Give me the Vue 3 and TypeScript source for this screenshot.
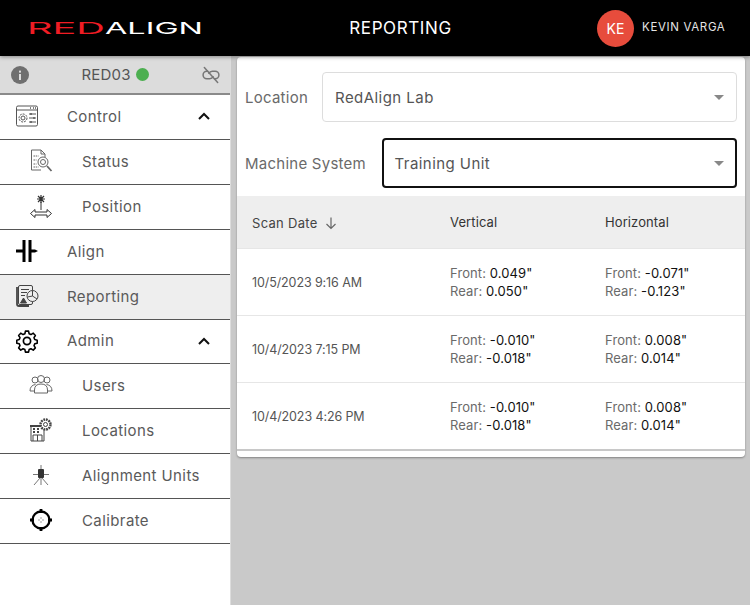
<template>
  <div class="app">
    <header class="topbar">
      <div class="topbar__logo">
        <svg class="logo" width="190" height="26" viewBox="0 0 190 26">
          <text x="3" y="19" class="logo-text" fill="#f01c24" textLength="78" lengthAdjust="spacingAndGlyphs">RED</text>
          <text x="81" y="19" class="logo-text" fill="#ffffff" textLength="98" lengthAdjust="spacingAndGlyphs">ALIGN</text>
        </svg>
      </div>
      <div class="topbar__title">REPORTING</div>
      <div class="topbar__user">
        <span class="avatar">KE</span>
        <span class="topbar__name">KEVIN VARGA</span>
      </div>
    </header>

    <div class="body">
      <aside class="sidebar">
        <div class="unit">
          <svg class="unit__info" width="18" height="18" viewBox="0 0 18 18">
            <circle cx="9" cy="9" r="9" fill="#6f6f6f" />
            <rect x="8" y="8" width="2" height="6" fill="#ddd" />
            <rect x="8" y="4.6" width="2" height="2" fill="#ddd" />
          </svg>
          <div class="unit__name">RED03<span class="unit__dot"></span></div>
          <svg class="unit__link" width="20" height="20" viewBox="0 0 24 24" fill="none" stroke="#777" stroke-width="1.8" stroke-linecap="round">
            <path d="M8 7.5H7a4.5 4.5 0 0 0 0 9h3.5a4.5 4.5 0 0 0 4-2.5" />
            <path d="M16 16.5h1a4.5 4.5 0 0 0 0-9h-3.5a4.5 4.5 0 0 0-4 2.5" />
            <path d="M4 3l16 18" />
          </svg>
        </div>

        <div class="nav-item">
          <svg class="nav-icon" width="24" height="24" viewBox="0 0 24 24" fill="none" stroke="#555" stroke-width="1">
            <rect x="1.5" y="2" width="21" height="20" rx="1.5" />
            <path d="M1.5 6h21" />
            <path d="M15 4h1M18 4h1M20 4h1" stroke-width="1.4" />
            <circle cx="8" cy="14" r="2" />
            <circle cx="8" cy="14" r="4" stroke-dasharray="2 1" />
            <path d="M14 10h7M14 14h7M14 18h7" />
            <path d="M16 9v2M19 13v2M16 17v2" stroke-width="1.4" />
          </svg>
          <span class="nav-label">Control</span>
          <svg class="nav-chevron" width="12" height="8" viewBox="0 0 12 8" fill="none" stroke="#111" stroke-width="2"><path d="M1 7l5-5 5 5" /></svg>
        </div>

        <div class="nav-item nav-item--child">
          <svg class="nav-icon" width="24" height="24" viewBox="0 0 24 24" fill="none" stroke="#666" stroke-width="1">
            <path d="M16 8V5l-4-4H2.5v20H12" />
            <path d="M12 1v4h4" />
            <path d="M4.5 7h5M4.5 11h3M4.5 15h3M4.5 18h5" stroke-dasharray="1.5 .7" />
            <circle cx="14" cy="13" r="5" />
            <circle cx="14" cy="13" r="2.5" />
            <path d="M18 17l4.5 5" stroke-width="1.8" />
          </svg>
          <span class="nav-label">Status</span>
        </div>

        <div class="nav-item nav-item--child">
          <svg class="nav-icon" width="24" height="24" viewBox="0 0 24 24" fill="none" stroke="#333" stroke-width="1">
            <path d="M12 8v8" />
            <path d="M8 5h8M12 1v8M9 2l6 6M15 2l-6 6" stroke-width="1.2" />
            <path d="M1.500 19.500l4.500-4v2.500h12v-2.500l4.500 4-4.500 4v-2.500H6v2.500z" />
          </svg>
          <span class="nav-label">Position</span>
        </div>

        <div class="nav-item">
          <svg class="nav-icon" width="24" height="24" viewBox="0 0 24 24" fill="#000">
            <rect x="7.500" y="1" width="3" height="22" />
            <rect x="13.500" y="1" width="3" height="22" />
            <rect x="1" y="10.500" width="7" height="3" />
            <path d="M16 10.500h4l3 1.500-3 1.500h-4z" />
          </svg>
          <span class="nav-label">Align</span>
        </div>

        <div class="nav-item nav-item--active">
          <svg class="nav-icon" width="24" height="24" viewBox="0 0 24 24" fill="none" stroke="#444" stroke-width="1">
            <path d="M2 3v17q0 2 2 2h10" stroke-width="1.800" />
            <rect x="3.500" y="1.500" width="14" height="19" rx="1.500" />
            <path d="M6 5.500h8M6 8.500h6M6 11.500h4" />
            <path d="M8.500 14l3 5h-6z" fill="#444" />
            <circle cx="17.500" cy="12" r="5.500" fill="#eee" />
            <path d="M17.500 6.500V12l4.500 3M17.500 12l-5 1" />
          </svg>
          <span class="nav-label">Reporting</span>
        </div>

        <div class="nav-item nav-item--short">
          <svg class="nav-icon" width="24" height="24" viewBox="0 0 24 24" fill="none" stroke="#000" stroke-width="1.700" stroke-linejoin="round">
            <path d="M10.300 2.300h3.400l.6 2.800 2 .9 2.500-1.500 2.300 2.500-1.500 2.400.8 2 2.700.7v3.400l-2.700.6-.8 2 1.500 2.400-2.300 2.400-2.500-1.500-2 .9-.6 2.800h-3.400l-.6-2.800-2-.9-2.500 1.500-2.300-2.400 1.500-2.400-.8-2-2.700-.6v-3.400l2.700-.7.8-2-1.500-2.400 2.300-2.500 2.500 1.500 2-.9z" transform="translate(12 12) scale(.92) translate(-12 -13)" />
            <circle cx="12" cy="12" r="3.600" />
          </svg>
          <span class="nav-label">Admin</span>
          <svg class="nav-chevron" width="12" height="8" viewBox="0 0 12 8" fill="none" stroke="#111" stroke-width="2"><path d="M1 7l5-5 5 5" /></svg>
        </div>

        <div class="nav-item nav-item--child">
          <svg class="nav-icon" width="24" height="24" viewBox="0 0 24 24" fill="none" stroke="#666" stroke-width="1">
            <circle cx="12" cy="6" r="3.500" />
            <circle cx="6" cy="7" r="3" />
            <circle cx="18" cy="7" r="3" />
            <path d="M5.500 20v-3q0-6 6.500-6t6.500 6v3z" fill="#fff" />
            <path d="M6.500 11.500C3 12 1 14 1 18h4.500M17.500 11.500C21 12 23 14 23 18h-4.500" />
          </svg>
          <span class="nav-label">Users</span>
        </div>

        <div class="nav-item nav-item--child">
          <svg class="nav-icon" width="24" height="24" viewBox="0 0 24 24" fill="none" stroke="#444" stroke-width="1">
            <path d="M2 8h13v15H2z" />
            <path d="M1 8h10" stroke-width="2" />
            <path d="M4 11h2M8 11h2M4 14h2M8 14h2" stroke-width="2" />
            <path d="M4 23v-6h9v6M8.500 17v6" />
            <circle cx="16.500" cy="6.500" r="5" stroke-dasharray="1.800 .8" stroke-width="2.400" fill="#fff" />
            <circle cx="16.500" cy="6.500" r="2" />
          </svg>
          <span class="nav-label">Locations</span>
        </div>

        <div class="nav-item nav-item--child">
          <svg class="nav-icon" width="24" height="24" viewBox="0 0 24 24" fill="none" stroke="#777" stroke-width="1">
            <path d="M12 2v5M4 11.500h16" />
            <rect x="9" y="6" width="6" height="9" rx="1" fill="#333" stroke="none" />
            <path d="M11 15l-6 7M13 15l6 7M12 15v7" />
          </svg>
          <span class="nav-label">Alignment Units</span>
        </div>

        <div class="nav-item nav-item--child">
          <svg class="nav-icon" width="24" height="24" viewBox="0 0 24 24" fill="none" stroke="#000">
            <circle cx="12" cy="12" r="8.500" stroke-width="2.300" />
            <path d="M12 1v4M12 19v4M1 12h4M19 12h4" stroke-width="2.800" />
            <path d="M12 9.500v1M12 13.500v1M9.500 12h1M13.500 12h1" stroke="#444" stroke-width="1" />
          </svg>
          <span class="nav-label">Calibrate</span>
        </div>
      </aside>

      <main class="main">
        <section class="panel">
          <div class="filter filter--first">
            <label class="filter__label">Location</label>
            <div class="select">
              <span>RedAlign Lab</span>
              <i class="select__caret"></i>
            </div>
          </div>
          <div class="filter">
            <label class="filter__label">Machine System</label>
            <div class="select select--focus">
              <span>Training Unit</span>
              <i class="select__caret"></i>
            </div>
          </div>

          <div class="grid grid--head">
            <div class="cell cell--date">
              Scan Date
              <svg class="sort" width="14" height="14" viewBox="0 0 14 14" fill="none" stroke="#666" stroke-width="1.200"><path d="M7 1.500v11M2.500 8l4.500 4.500L11.500 8" /></svg>
            </div>
            <div class="cell">Vertical</div>
            <div class="cell">Horizontal</div>
          </div>
          <div v-for="row in rows" :key="row.date + row.vf" class="grid grid--row">
            <div class="cell cell--date">{{ row.date }}</div>
            <div class="cell cell--values">
              <div>Front: <b>{{ row.vf }}</b></div>
              <div>Rear: <b>{{ row.vr }}</b></div>
            </div>
            <div class="cell cell--values">
              <div>Front: <b>{{ row.hf }}</b></div>
              <div>Rear: <b>{{ row.hr }}</b></div>
            </div>
          </div>
          <div class="panel__foot"></div>
        </section>
      </main>
    </div>
  </div>
</template>

<script setup lang="ts">
interface Scan {
  date: string;
  vf: string;
  vr: string;
  hf: string;
  hr: string;
}

const rows: Scan[] = [
  { date: '10/5/2023 9:16 AM', vf: '0.049"', vr: '0.050"', hf: '-0.071"', hr: '-0.123"' },
  { date: '10/4/2023 7:15 PM', vf: '-0.010"', vr: '-0.018"', hf: '0.008"', hr: '0.014"' },
  { date: '10/4/2023 4:26 PM', vf: '-0.010"', vr: '-0.018"', hf: '0.008"', hr: '0.014"' },
];
</script>

<style>
html,
body {
  margin: 0;
  height: 100%;
  overflow: hidden;
}
</style>

<style scoped>
.app {
  width: 750px;
  height: 605px;
  display: flex;
  flex-direction: column;
  font-family: Inter, "Liberation Sans", sans-serif;
  color: #444;
  background: #c9c9c9;
}

.topbar {
  height: 56px;
  flex-shrink: 0;
  background: #000;
  color: #fff;
  display: flex;
  align-items: center;
  position: relative;
  z-index: 2;
  box-shadow: 0 1px 4px rgba(0, 0, 0, 0.4);
}

.topbar__logo {
  width: 280px;
  padding-left: 24px;
  box-sizing: border-box;
  display: flex;
}

.logo {
  overflow: visible;
}

.logo-text {
  font-family: Inter, sans-serif;
  font-size: 16.500px;
  font-weight: 400;
}

.topbar__title {
  width: 241px;
  text-align: center;
  font-size: 17px;
  letter-spacing: 0.6px;
}

.topbar__user {
  display: flex;
  align-items: center;
  margin-left: 76px;
  gap: 8px;
}

.avatar {
  width: 37px;
  height: 37px;
  border-radius: 50%;
  background: #e74c3c;
  font-size: 14px;
  display: flex;
  align-items: center;
  justify-content: center;
}

.topbar__name {
  font-size: 11.5px;
  letter-spacing: 0.65px;
  margin-top: -2px;
  color: #e4e4e4;
}

.body {
  flex: 1;
  display: flex;
  min-height: 0;
}

.sidebar {
  width: 230px;
  flex-shrink: 0;
  background: #fff;
  border-right: 1px solid #ddd;
}

.unit {
  height: 37px;
  background: #dcdcdc;
  border-bottom: 2px solid #8a8a8a;
  display: flex;
  align-items: center;
  padding: 0 9px 0 11px;
}

.unit__name {
  flex: 1;
  display: flex;
  align-items: center;
  justify-content: center;
  gap: 5px;
  font-size: 15px;
  letter-spacing: 0.2px;
  color: #555;
}

.unit__dot {
  width: 13px;
  height: 13px;
  border-radius: 50%;
  background: #4caf50;
}

.nav-item {
  height: 42px;
  padding-bottom: 2px;
  display: flex;
  align-items: center;
  padding-left: 15px;
  border-bottom: 1px solid #555;
  font-size: 15px;
  color: #5a5a5a;
}

.nav-item--short {
  height: 41px;
}

.nav-item--child {
  padding-left: 29px;
}

.nav-item--active {
  background: #eee;
}

.nav-icon {
  flex-shrink: 0;
}

.nav-label {
  margin-left: 28px;
  letter-spacing: 0.4px;
}

.nav-item--child .nav-label {
  margin-left: 29px;
}

.nav-chevron {
  margin-left: auto;
  margin-right: 20px;
}

.main {
  flex: 1;
  padding: 1px 5px 0 6px;
  min-width: 0;
}

.panel {
  background: #fff;
  border-radius: 4px;
  box-shadow: 0 1px 2px rgba(0, 0, 0, 0.35);
}

.filter {
  display: flex;
  align-items: center;
  padding: 16px 8px 0;
  height: 50px;
}

.filter--first {
  padding-top: 15px;
}

.filter__label {
  font-size: 15px;
  letter-spacing: 0.25px;
  color: #6a6a6a;
  white-space: nowrap;
  margin-right: 15.500px;
}

.filter--first .filter__label {
  margin-right: 14px;
}

.select {
  flex: 1;
  height: 50px;
  box-sizing: border-box;
  border: 1px solid #ddd;
  border-radius: 4px;
  display: flex;
  align-items: center;
  justify-content: space-between;
  padding: 0 12px;
  font-size: 15px;
  letter-spacing: 0.45px;
  color: #555;
}

.select--focus {
  border: 2px solid #111;
  padding: 0 11px;
}

.select__caret {
  width: 0;
  height: 0;
  border-left: 5px solid transparent;
  border-right: 5px solid transparent;
  border-top: 5px solid #888;
}

.grid {
  display: grid;
  grid-template-columns: 198px 156px 1fr;
  border-bottom: 1px solid #e6e6e6;
}

.grid--head {
  margin-top: 8px;
  height: 52px;
  background: #eee;
  font-size: 13px;
  font-weight: 400;
  color: #333;
  align-items: center;
}

.grid--row {
  height: 66px;
  align-items: center;
  font-size: 13px;
}

.cell {
  padding-left: 14px;
  line-height: 18.500px;
  letter-spacing: 0.1px;
}

.grid .cell:nth-child(2) {
  padding-left: 15px;
}

.cell--date {
  display: flex;
  align-items: center;
  gap: 6px;
  padding-left: 15px;
  padding-top: 2px;
  color: #555;
  font-size: 12.5px;
  letter-spacing: -0.1px;
}

.grid--head .cell--date {
  color: #444;
  font-size: 13px;
  letter-spacing: 0.3px;
}

.cell--values {
  color: #6a6a6a;
}

.cell--values b {
  color: #111;
  font-weight: 400;
}

.panel__foot {
  height: 6px;
  border-top: 2px solid #c8c8c8;
  margin-top: -1px;
}
</style>
